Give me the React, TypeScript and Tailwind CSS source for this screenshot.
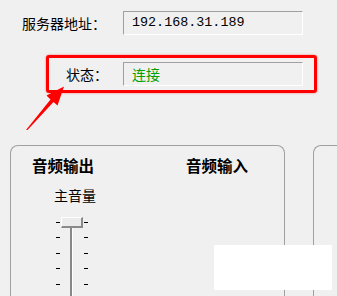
import React from "react";

const cjk = { fontFamily: '"Noto Sans CJK SC", "Noto Sans", sans-serif' };
const mono = { fontFamily: '"Liberation Mono", "DejaVu Sans Mono", monospace' };

function Field({ children, className = "" }: { children: React.ReactNode; className?: string }) {
  return (
    <div
      className={`w-[180px] h-[24px] border-t border-l border-b border-r border-t-[#a0a0a0] border-l-[#a0a0a0] border-b-white border-r-white flex items-center pl-[8px] ${className}`}
    >
      {children}
    </div>
  );
}

function Ticks() {
  return (
    <div className="flex flex-col pt-[5px] gap-[14.5px] w-[4px]">
      {[0, 1, 2, 3, 4].map((i) => (
        <div key={i} className="h-[1px] w-[4px] bg-black" />
      ))}
    </div>
  );
}

export default function App() {
  return (
    <div className="relative w-[337px] h-[296px] bg-[#f0f0f0] overflow-hidden text-black" style={cjk}>
      {/* Row 1 */}
      <div className="flex items-center pt-[11px] pl-[22px]">
        <div className="w-[101px] text-[14px] leading-none">服务器地址：</div>
        <Field>
          <span className="text-[13.4px] leading-none tracking-[0px]" style={mono}>
            192.168.31.189
          </span>
        </Field>
      </div>

      {/* Row 2 with red highlight */}
      <div className="mt-[20px] ml-[46px] w-[271px] h-[38px] border-[3px] border-[#ff0000] rounded-[3px] shadow-[0_0_2px_rgba(255,0,0,0.6)] flex items-center pl-[17px]">
        <div className="w-[57px] text-[14px] leading-none">状态：</div>
        <Field>
          <span className="text-[14px] leading-none text-[#00a000]">连接</span>
        </Field>
      </div>

      {/* Group boxes */}
      <div className="flex mt-[52px] ml-[10px] gap-[28px]">
        <div className="w-[275px] h-[160px] border-t border-l border-r border-[#a0a0a0] rounded-t-[8px] shrink-0">
          <div className="flex pt-[12px] pl-[21px] text-[15.5px] leading-none font-bold">
            <span className="w-[154px]">音频输出</span>
            <span>音频输入</span>
          </div>
          <div className="pl-[43px] mt-[14px] text-[14px] leading-none">主音量</div>
          <div className="flex mt-[15px] ml-[45px] h-[90px]">
            <Ticks />
            <div className="ml-[1px] w-[22px] flex flex-col">
              <div className="h-[11px] w-[22px] bg-[#ececec] border-t border-l border-white border-b-[2px] border-r-[2px] border-b-[#8a8a8a] border-r-[#8a8a8a]" />
              <div className="ml-[9px] w-[3px] flex-1 bg-[#888888] border-r border-white" />
            </div>
            <div className="ml-[1px]">
              <Ticks />
            </div>
          </div>
        </div>
        <div className="w-[80px] h-[160px] border-t border-l border-[#a0a0a0] rounded-tl-[8px] shrink-0" />
      </div>

      {/* White overlay rectangle */}
      <div className="absolute left-[214px] top-[245px] w-[118px] h-[45px] bg-white" />

      {/* Red arrow annotation */}
      <svg className="absolute left-0 top-0" width="337" height="296" viewBox="0 0 337 296">
        <polygon
          points="26,130 50.5,99.5 46.5,95.5 64,86.5 57.5,105.5 53.5,102 27.5,130"
          fill="#ff0000"
        />
      </svg>
    </div>
  );
}
